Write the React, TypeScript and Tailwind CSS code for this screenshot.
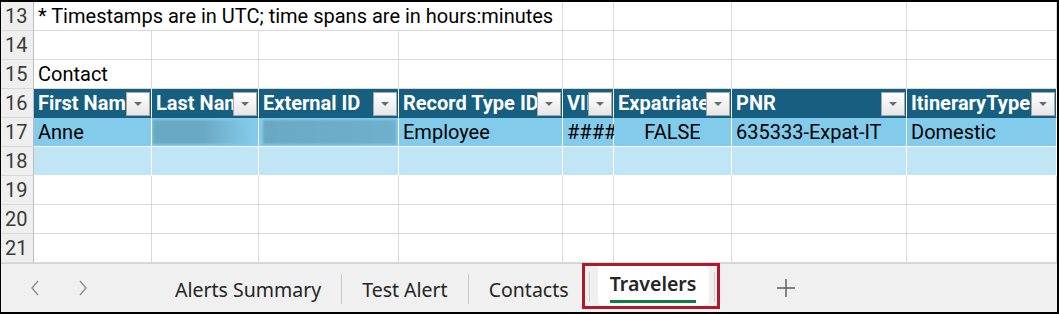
import React from "react";

const gridCols = "grid-cols-[33px_118px_107px_140px_164px_51px_118px_175px_150px]";

function FilterBtn() {
  return (
    <div className="absolute right-[1px] top-[3px] w-[24px] h-[24px] border border-[#a6a6a6] bg-gradient-to-b from-[#ffffff] to-[#e6e6e6] flex items-center justify-center">
      <svg width="10" height="6" viewBox="0 0 10 6">
        <path d="M1 1 L9 1 L5 5 Z" fill="#6b6b6b" />
      </svg>
    </div>
  );
}

function RowHead({ n }: { n: number }) {
  return (
    <div className="h-[29px] bg-[#efefef] border-r border-r-[#bcbcbc] border-b border-b-[#d9d9d9] flex items-center pl-[4px] text-[20px] text-[#3a3a3a] leading-none">
      {n}
    </div>
  );
}

const cellFont = { fontFamily: "Roboto, 'Liberation Sans', sans-serif" };

export default function App() {
  const headers = ["First Nam", "Last Nam", "External ID", "Record Type ID", "VII", "Expatriate", "PNR", "ItineraryType"];
  return (
    <div className="w-[1059px] h-[314px] bg-white border-t-2 border-l border-r-2 border-b-2 border-black flex flex-col overflow-hidden" style={cellFont}>
      <div className={`grid ${gridCols} text-[20px] text-black`}>
        {/* Row 13 */}
        <RowHead n={13} />
        <div className="col-span-4 h-[29px] border-r border-b border-[#d9d9d9] flex items-center pl-[4px] whitespace-nowrap">
          * Timestamps are in UTC; time spans are in hours:minutes
        </div>
        {[5, 6, 7, 8].map((i) => (
          <div key={i} className="h-[29px] border-r border-b border-[#d9d9d9]" />
        ))}
        {/* Row 14 */}
        <RowHead n={14} />
        {[1, 2, 3, 4, 5, 6, 7, 8].map((i) => (
          <div key={i} className="h-[29px] border-r border-b border-[#d9d9d9]" />
        ))}
        {/* Row 15 */}
        <RowHead n={15} />
        <div className="h-[29px] border-r border-b border-[#d9d9d9] flex items-center pl-[4px]">Contact</div>
        {[2, 3, 4, 5, 6, 7, 8].map((i) => (
          <div key={i} className="h-[29px] border-r border-b border-[#d9d9d9]" />
        ))}
        {/* Row 16 header */}
        <RowHead n={16} />
        {headers.map((h, i) => (
          <div key={i} className="relative h-[29px] bg-[#165f80] border-r border-white border-b border-b-[#165f80] flex items-center pl-[4px] text-white font-bold whitespace-nowrap overflow-hidden">
            {h}
            <FilterBtn />
          </div>
        ))}
        {/* Row 17 */}
        <RowHead n={17} />
        <div className="h-[29px] bg-[#83cbeb] border-r border-b border-white flex items-center pl-[4px]">Anne</div>
        <div className="h-[29px] bg-[#83cbeb] border-r border-b border-white flex items-center pl-[1px] overflow-hidden">
          <div className="w-[100px] h-[24px] bg-gradient-to-r from-[#6aa9c4] via-[#6aa9c4] to-[#83cbeb] blur-[1px]" />
        </div>
        <div className="h-[29px] bg-[#83cbeb] border-r border-b border-white flex items-center pl-[4px] overflow-hidden">
          <div className="w-[133px] h-[24px] bg-gradient-to-r from-[#6aa9c4] to-[#6fb0cc] blur-[1px]" />
        </div>
        <div className="h-[29px] bg-[#83cbeb] border-r border-b border-white flex items-center pl-[4px]">Employee</div>
        <div className="h-[29px] bg-[#83cbeb] border-r border-b border-white flex items-center pl-[4px]">####</div>
        <div className="h-[29px] bg-[#83cbeb] border-r border-b border-white flex items-center justify-center">FALSE</div>
        <div className="h-[29px] bg-[#83cbeb] border-r border-b border-white flex items-center pl-[4px]">635333-Expat-IT</div>
        <div className="h-[29px] bg-[#83cbeb] border-r border-b border-white flex items-center pl-[4px]">Domestic</div>
        {/* Row 18 */}
        <RowHead n={18} />
        {[1, 2, 3, 4, 5, 6, 7, 8].map((i) => (
          <div key={i} className="h-[29px] bg-[#c0e5f5] border-r border-b border-white" />
        ))}
        {[19, 20, 21].map((r) => (
          <React.Fragment key={r}>
            <RowHead n={r} />
            {[1, 2, 3, 4, 5, 6, 7, 8].map((i) => (
              <div key={i} className="h-[29px] border-r border-b border-[#d9d9d9]" />
            ))}
          </React.Fragment>
        ))}
      </div>
      {/* Tab bar */}
      <div className="flex-1 bg-[#f0f0f0] border-t border-[#d4d4d4] flex items-start text-[19.5px] text-[#242424]" style={{ fontFamily: "'Noto Sans', 'Open Sans', sans-serif" }}>
        <div className="flex items-center h-[47px] pl-[29px]">
          <svg width="10" height="16" viewBox="0 0 10 16">
            <path d="M8 1 L2 8 L8 15" fill="none" stroke="#8c8c8c" strokeWidth="1.4" />
          </svg>
          <svg className="ml-[38px]" width="10" height="16" viewBox="0 0 10 16">
            <path d="M2 1 L8 8 L2 15" fill="none" stroke="#8c8c8c" strokeWidth="1.4" />
          </svg>
        </div>
        <div className="flex items-center h-[50px] ml-[87px]">
          <span className="pt-[2px]">Alerts Summary</span>
          <div className="w-px h-[30px] bg-[#c8c8c8] mx-[20px]" />
          <span className="pt-[2px]">Test Alert</span>
          <div className="w-px h-[30px] bg-[#c8c8c8] mx-[20px]" />
          <span className="pt-[2px]">Contacts</span>
        </div>
        <div className="ml-[13px] -mt-px w-[138px] h-[46px] border-[3px] border-[#b0182d] flex items-start shrink-0">
          <div className="w-px h-[30px] bg-[#cfcfcf] ml-[4px] mt-[6px]" />
          <div className="ml-[8px] w-[111px] h-[40px] bg-white rounded-b-[6px] flex flex-col items-center pt-[5px]">
            <span className="font-semibold leading-[26px]">Travelers</span>
            <div className="w-[86px] h-[3px] bg-[#107c41] mt-[3px]" />
          </div>
          <div className="w-px h-[30px] bg-[#cfcfcf] ml-[5px] mt-[6px]" />
        </div>
        <div className="flex items-center h-[47px] ml-[56px]">
          <svg width="20" height="20" viewBox="0 0 20 20">
            <path d="M10 1 V19 M1 10 H19" stroke="#5a5a5a" strokeWidth="1.4" />
          </svg>
        </div>
      </div>
    </div>
  );
}
